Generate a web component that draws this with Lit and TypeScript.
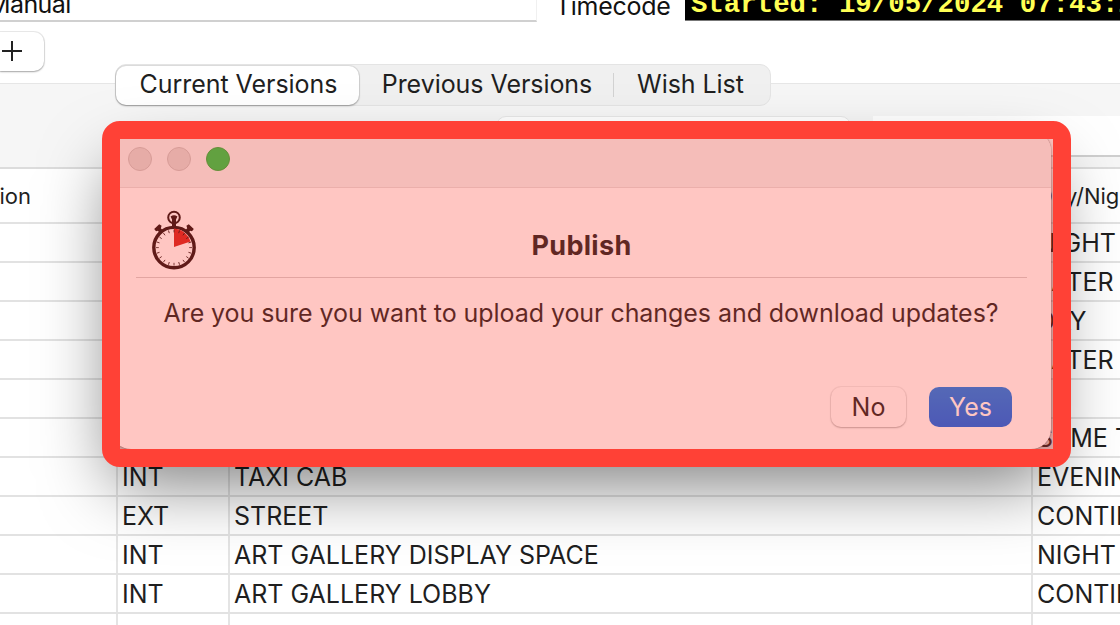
import { LitElement, html, css, svg } from 'lit'
import { customElement, property } from 'lit/decorators.js'

interface SceneRow {
  place: string
  set: string
  time: string
}

const ROWS: SceneRow[] = [
  { place: 'INT', set: '', time: 'NIGHT' },
  { place: 'INT', set: '', time: 'LATER' },
  { place: 'INT', set: '', time: 'DAY' },
  { place: 'INT', set: '', time: 'LATER' },
  { place: '', set: '', time: '' },
  { place: 'INT', set: '', time: 'SAME TIME' },
  { place: 'INT', set: 'TAXI CAB', time: 'EVENING' },
  { place: 'EXT', set: 'STREET', time: 'CONTINUOUS' },
  { place: 'INT', set: 'ART GALLERY DISPLAY SPACE', time: 'NIGHT' },
  { place: 'INT', set: 'ART GALLERY LOBBY', time: 'CONTINUOUS' },
  { place: '', set: '', time: '' },
]

/**
 * Stopwatch glyph shown beside the dialog title
 */
@customElement('stopwatch-icon')
export class StopwatchIcon extends LitElement {
  static styles = css`
    :host {
      display: block;
      width: 46px;
      height: 60px;
    }

    svg {
      display: block;
    }
  `

  render() {
    const ticks = Array.from({ length: 20 }, (_, i) => i * 18)
    return html`
      <svg width="46" height="60" viewBox="0 0 46 60" fill="none">
        <circle cx="23" cy="37.6" r="20.2" fill="#fff" stroke="#1c0a0c" stroke-width="3.4" />
        <path d="M23 37V18.5A18.5 18.5 0 0 1 39.5 31.5Z" fill="#d2201c" />
        ${ticks.map(
          a => svg`<line x1="23" y1="19.6" x2="23" y2="22.4" stroke="#1c0a0c" stroke-width="0.8" transform="rotate(${a} 23 37.6)" />`
        )}
        <circle cx="23" cy="7.5" r="5.8" stroke="#1c0a0c" stroke-width="2" />
        <path d="M19.6 6.4Q23 4 26.4 6.4L25 9.4V17H21V9.4Z" fill="#1c0a0c" />
        <path d="M3.2 19L8.2 14.2L10.6 15.8L9.8 18.2L12.4 21L9.2 24L7 20.8L5 21.2Z" fill="#1c0a0c" />
        <path d="M42.8 19L37.8 14.2L35.4 15.8L36.2 18.2L33.6 21L36.8 24L39 20.8L41 21.2Z" fill="#1c0a0c" />
      </svg>
    `
  }
}

/**
 * Publish confirmation window
 */
@customElement('publish-dialog')
export class PublishDialog extends LitElement {
  @property({ type: String }) heading: string = ''
  @property({ type: String }) message: string = ''

  static styles = css`
    :host {
      display: flex;
      flex-direction: column;
      box-sizing: border-box;
      width: 940px;
      height: 318px;
      border-radius: 20px;
      background: #fff;
      overflow: hidden;
      color: #1c1c1c;
      box-shadow:
        0 0 2px rgba(0, 0, 0, 0.6),
        0 35px 68px rgba(0, 0, 0, 0.5);
    }

    .titlebar {
      display: flex;
      align-items: center;
      gap: 15px;
      box-sizing: border-box;
      height: 57px;
      padding-left: 17px;
      background: #f1f3f3;
      border-bottom: 1px solid #e2dfdf;
    }

    .light {
      box-sizing: border-box;
      width: 24px;
      height: 24px;
      border-radius: 50%;
      background: #dbdad9;
      border: 1px solid #c6c2c1;
    }

    .light.zoom {
      background: #1fcb45;
      border-color: #25ae3c;
    }

    .head {
      display: grid;
      grid-template-columns: 60px 1fr 75px;
      box-sizing: border-box;
      height: 90px;
      margin: 0 24px 0 25px;
      padding: 22px 0 0 15px;
      border-bottom: 1px solid #d6d0d0;
    }

    h1 {
      margin: 21px 0 0;
      font-size: 27px;
      line-height: 30px;
      font-weight: 700;
      letter-spacing: 0.3px;
      text-align: center;
    }

    .message {
      margin: 20px 0 0;
      font-size: 25px;
      line-height: 30px;
      letter-spacing: -0.06px;
      text-align: center;
      white-space: nowrap;
    }

    .actions {
      display: flex;
      justify-content: flex-end;
      gap: 23px;
      margin: 59px 39px 0 0;
    }

    button {
      box-sizing: border-box;
      height: 40px;
      padding: 0;
      border: 0;
      border-radius: 10px;
      font: inherit;
      font-size: 25px;
      line-height: 38px;
      color: inherit;
    }

    .no {
      width: 75px;
      background: #fff;
      box-shadow:
        0 0 0 1px rgba(0, 0, 0, 0.06),
        0 1px 2px rgba(0, 0, 0, 0.25);
    }

    .yes {
      width: 83px;
      background: linear-gradient(#0c7aee, #0062ee);
      color: #fff;
    }
  `

  render() {
    return html`
      <div class="titlebar">
        <span class="light"></span>
        <span class="light"></span>
        <span class="light zoom"></span>
      </div>
      <div class="head">
        <stopwatch-icon></stopwatch-icon>
        <h1>${this.heading}</h1>
      </div>
      <p class="message">${this.message}</p>
      <div class="actions">
        <button class="no">No</button>
        <button class="yes">Yes</button>
      </div>
    `
  }
}

@customElement('app-root')
export class AppRoot extends LitElement {
  static styles = css`
    :host {
      display: block;
      position: relative;
      width: 1120px;
      height: 625px;
      overflow: hidden;
      background: #fff;
      color: #1f1f1f;
      font-family: Inter, 'Liberation Sans', sans-serif;
      font-size: 25px;
      line-height: 30px;
      white-space: nowrap;
    }

    .toolbar {
      display: flex;
      height: 22px;
      color: #111;
    }

    .field {
      box-sizing: border-box;
      width: 537px;
      border-bottom: 2px solid #d0d0d0;
      border-right: 1px solid #f0f0f0;
    }

    .field span,
    .label span,
    .timecode span {
      display: block;
      margin-top: -11px;
    }

    .field span {
      margin-left: -12px;
      letter-spacing: -0.6px;
    }

    .label {
      width: 128px;
      margin-left: 20px;
      letter-spacing: -0.3px;
    }

    .label span {
      margin: -9px 0 0 -2px;
    }

    .timecode {
      flex: 1;
      height: 20px;
      padding-left: 6px;
      background: #000;
      color: #ffff54;
      border-bottom: 1px solid #777;
      font-family: 'Liberation Mono', monospace;
      font-weight: 700;
      font-size: 27.4px;
      overflow: hidden;
    }

    .timecode span {
      margin-top: -10px;
    }

    .add-row {
      height: 61px;
      padding-top: 10px;
      box-sizing: border-box;
    }

    .add {
      display: flex;
      align-items: center;
      box-sizing: border-box;
      width: 44px;
      height: 39px;
      border-radius: 0 10px 10px 0;
      box-shadow:
        0 0 0 1px rgba(0, 0, 0, 0.08),
        0 1px 2px rgba(0, 0, 0, 0.3);
    }

    .panel {
      box-sizing: border-box;
      height: 86px;
      background: #f6f6f6;
      border-top: 1px solid #e6e6e6;
      border-bottom: 2px solid #dcdcdc;
    }

    .tabs {
      display: flex;
      align-items: center;
      box-sizing: border-box;
      width: 656px;
      height: 42px;
      margin: -20px 0 0 115px;
      border: 1px solid #e4e4e4;
      border-radius: 11px;
      background: #f0f0f0;
      letter-spacing: -0.05px;
    }

    .tab {
      box-sizing: border-box;
      width: 254px;
      padding: 0 0 2px 2px;
      text-align: center;
    }

    .tab.active {
      width: 243px;
      height: 39px;
      line-height: 37px;
      border-radius: 10px;
      background: #fff;
      box-shadow:
        0 0 0 1px rgba(0, 0, 0, 0.07),
        0 1px 2px rgba(0, 0, 0, 0.3);
    }

    .tab.last {
      flex: 1;
      padding: 0 3px 1px 0;
      border-left: 1px solid #d2d2d2;
      line-height: 23px;
    }

    .filters {
      display: flex;
      gap: 22px;
      margin: 10px 0 0 496px;
    }

    .filter {
      box-sizing: border-box;
      width: 355px;
      height: 41px;
      border-radius: 10px;
      background: #fff;
      border: 1px solid #e8e8e8;
    }

    .filter.search {
      flex: 1;
      border: 0;
      border-radius: 0;
      border-bottom: 2px solid #cfcfcf;
    }

    .row {
      display: grid;
      grid-template-columns: 116px 112px 803px 1fr;
      grid-template-rows: 37px;
      box-sizing: border-box;
      height: 39px;
      border-bottom: 2px solid #e2e2e2;
      line-height: 39px;
    }

    .row > span + span {
      padding-left: 4px;
      border-left: 2px solid #e4e4e4;
    }

    .row.header {
      grid-template-rows: 53px;
      height: 55px;
      line-height: 54px;
      font-size: 22px;
    }

    .row.header > span {
      border-color: transparent;
    }

    .clip {
      display: flex;
      justify-content: flex-end;
      width: 31px;
      overflow: hidden;
    }

    .window {
      position: absolute;
      left: 111px;
      top: 131px;
    }

    .highlight {
      position: absolute;
      left: 102px;
      top: 121px;
      box-sizing: border-box;
      width: 969px;
      height: 346px;
      border: 18px solid #ff4136;
      border-radius: 18px;
      background: rgba(255, 65, 54, 0.3);
      background-clip: padding-box;
    }
  `

  render() {
    return html`
      <div class="toolbar">
        <div class="field"><span>Manual</span></div>
        <div class="label"><span>Timecode</span></div>
        <div class="timecode"><span>Started: 19/05/2024 07:43:21</span></div>
      </div>
      <div class="add-row">
        <div class="add">
          <svg width="24" height="24" viewBox="0 0 24 24" stroke="#222" stroke-width="2">
            <path d="M2 11H22M12 1V21" />
          </svg>
        </div>
      </div>
      <div class="panel">
        <div class="tabs">
          <div class="tab active">Current Versions</div>
          <div class="tab">Previous Versions</div>
          <div class="tab last">Wish List</div>
        </div>
        <div class="filters">
          <div class="filter"></div>
          <div class="filter search"></div>
        </div>
      </div>
      <div class="row header">
        <span class="clip">Description</span>
        <span></span>
        <span></span>
        <span>Day/Night</span>
      </div>
      ${ROWS.map(
        row => html`
          <div class="row">
            <span></span>
            <span>${row.place}</span>
            <span>${row.set}</span>
            <span>${row.time}</span>
          </div>
        `
      )}
      <publish-dialog
        class="window"
        heading="Publish"
        message="Are you sure you want to upload your changes and download updates?"
      ></publish-dialog>
      <div class="highlight"></div>
    `
  }
}

declare global {
  interface HTMLElementTagNameMap {
    'stopwatch-icon': StopwatchIcon
    'publish-dialog': PublishDialog
    'app-root': AppRoot
  }
}
